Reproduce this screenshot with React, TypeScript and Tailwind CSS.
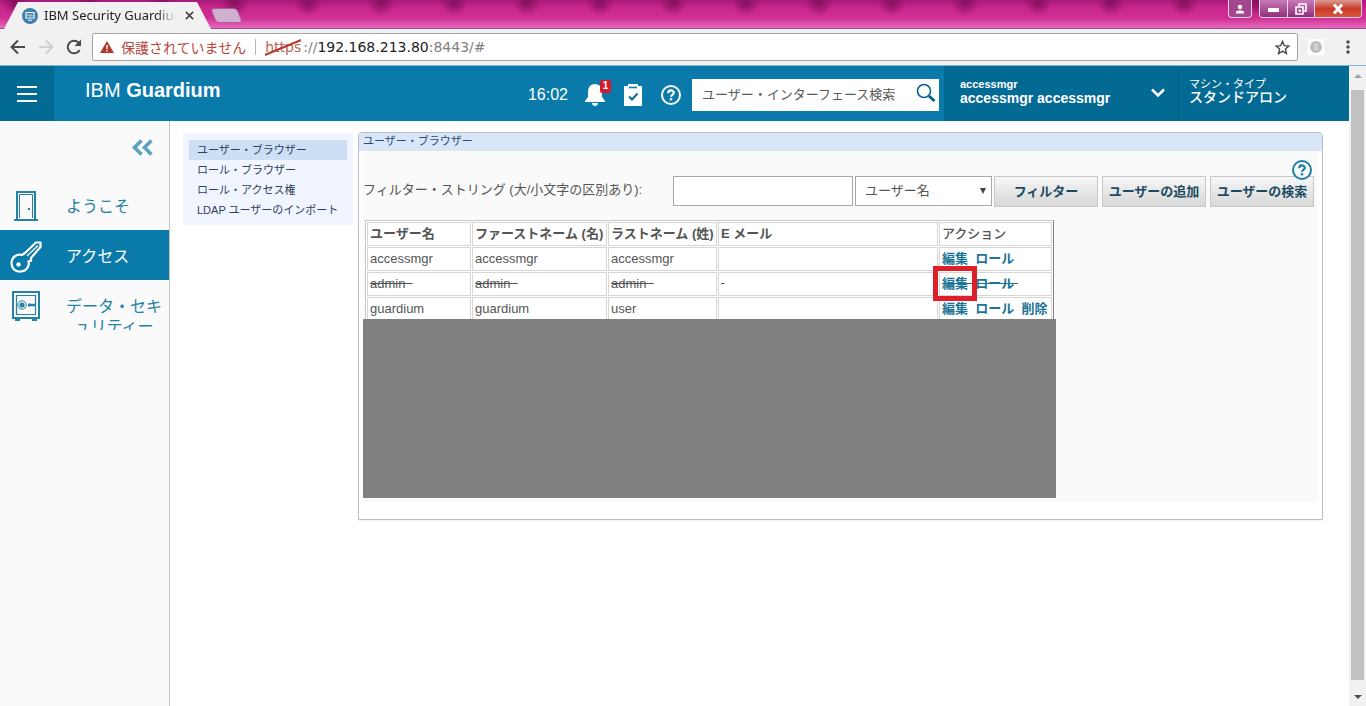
import type { ReactNode } from "react";

type User = {
  name: string;
  first: string;
  last: string;
  disabled?: boolean;
  removable?: boolean;
};

const users: User[] = [
  { name: "accessmgr", first: "accessmgr", last: "accessmgr" },
  { name: "admin", first: "admin", last: "admin", disabled: true },
  { name: "guardium", first: "guardium", last: "user", removable: true },
];

const menu = ["ユーザー・ブラウザー", "ロール・ブラウザー", "ロール・アクセス権", "LDAP ユーザーのインポート"];

const NBSP = "\u00a0";

function HelpIcon({ className }: { className?: string }) {
  return (
    <svg viewBox="0 0 20 20" className={className} fill="none" stroke="currentColor" strokeWidth="2">
      <circle cx="10" cy="10" r="9" />
      <path d="M7.2 8.2c0-3.6 5.6-3.6 5.6-.4 0 2-2.8 2-2.8 4" strokeWidth="2.2" />
      <path d="M10 13.2v2.2" strokeWidth="2.4" />
    </svg>
  );
}

function WindowButtons() {
  return (
    <div className="ml-auto flex h-[18px] gap-[7px] pr-1">
      <button aria-label="プロファイル" className="flex w-6 items-center justify-center rounded-b border border-t-0 border-pink-200 bg-[#a3468f]">
        <svg viewBox="0 0 10 10" className="size-[10px] fill-white">
          <circle cx="5" cy="3" r="2.2" />
          <path d="M1 9.5V8c0-2 8-2 8 0v1.5z" />
        </svg>
      </button>
      <div className="flex overflow-hidden rounded-b border border-t-0 border-pink-200">
        <button aria-label="最小化" className="flex w-7 items-end justify-center border-r border-pink-200 bg-linear-to-b from-[#c77ab8] to-[#8e2f7c] pb-[5px]">
          <span className="h-1 w-[11px] bg-white" />
        </button>
        <button aria-label="元に戻す" className="flex w-[27px] items-center justify-center border-r border-pink-200 bg-linear-to-b from-[#c77ab8] to-[#8e2f7c]">
          <svg viewBox="0 0 12 12" className="size-3" fill="none" stroke="white" strokeWidth="1.6">
            <path d="M4 3V1h7v7H9" />
            <path d="M1 4h7v7H1z" />
            <path d="M4 7h1.5v1.5H4z" strokeWidth="1" />
          </svg>
        </button>
        <button aria-label="閉じる" className="flex w-[46px] items-center justify-center bg-linear-to-b from-[#d99a90] via-[#c8382a] to-[#d8573a]">
          <svg viewBox="0 0 12 10" className="h-[10px] w-3" stroke="white" strokeWidth="3">
            <path d="M2 0.5l8 9M10 0.5l-8 9" />
          </svg>
        </button>
      </div>
    </div>
  );
}

function TabStrip() {
  return (
    <div className="flex h-[29px] border-b border-[#9d4a90] bg-[radial-gradient(ellipse_14px_14px_at_16px_2px,#84105f,transparent),linear-gradient(#a81a7c,#c9278a_30%,#cf2f94_65%,#e86bbd)] [background-size:73px_100%]">
      <div className="ml-1 flex h-[29px] w-[207px] items-center bg-[#f2f1f2] pl-[18px] pt-[2px] text-[13px] text-[#222] [clip-path:polygon(0_100%,14px_2px,193px_2px,100%_100%)] font-['Noto_Sans','Noto_Sans_CJK_JP',sans-serif]">
        <svg viewBox="0 0 16 16" className="size-4 shrink-0">
          <circle cx="8" cy="8" r="8" fill="#3f7fae" />
          <path d="M4 4.5h8v5.5H4zM6 12.3h4" fill="none" stroke="#fff" strokeWidth="1.1" />
          <path d="M5 8l1.5-1.5L8 8.5l1.2-2 1.6 1.7" fill="none" stroke="#fff" strokeWidth=".8" />
        </svg>
        <span className="ml-[6px] w-[132px] overflow-hidden whitespace-nowrap [mask-image:linear-gradient(to_right,black_85%,transparent)]">
          IBM Security Guardium
        </span>
        <button aria-label="タブを閉じる" className="ml-[9px]">
          <svg viewBox="0 0 10 10" className="size-[9px]" stroke="#444" strokeWidth="1.8">
            <path d="M1 1l8 8M9 1l-8 8" />
          </svg>
        </button>
      </div>
      <button aria-label="新しいタブ" className="mt-2 ml-[2px] h-[15px] w-[27px] skew-x-[22deg] rounded-sm border border-[#b0589c] bg-[#d0b0cf]" />
      <WindowButtons />
    </div>
  );
}

function AddressBar() {
  return (
    <div className="flex h-[37px] items-center border-b border-[#86b6d6] bg-[#f2f1f2] pl-[9px] text-[#4a4a4a]">
      <button aria-label="戻る">
        <svg viewBox="0 0 18 18" className="size-[18px]" fill="none" stroke="#4a4a4a" strokeWidth="2">
          <path d="M16 9H3M9 2.5L2.5 9 9 15.5" />
        </svg>
      </button>
      <button aria-label="進む" className="ml-[10px]">
        <svg viewBox="0 0 18 18" className="size-[18px]" fill="none" stroke="#d0d0d0" strokeWidth="2">
          <path d="M2 9h13M9 2.5L15.5 9 9 15.5" />
        </svg>
      </button>
      <button aria-label="再読み込み" className="ml-[10px]">
        <svg viewBox="0 0 18 18" className="size-[18px]" fill="none" stroke="#4a4a4a" strokeWidth="2">
          <path d="M14.6 12A6.3 6.3 0 1 1 13.5 4.6" />
          <path d="M16 1.5v6.5H9.5z" fill="#4a4a4a" stroke="none" />
        </svg>
      </button>
      <div className="ml-[9px] flex h-7 flex-1 items-center rounded-xs border border-[#a5a5a5] bg-white px-[7px] text-[14px] font-['DejaVu_Sans','Noto_Sans_CJK_JP',sans-serif]">
        <svg viewBox="0 0 14 12" className="h-3 w-[14px]">
          <path d="M7 0l7 12H0z" fill="#b23a2c" />
          <path d="M7 4v4M7 9v1.5" stroke="#fff" strokeWidth="1.4" />
        </svg>
        <span className="ml-[7px] text-[#b8483c] font-['Noto_Sans_CJK_JP',sans-serif]">保護されていません</span>
        <span className="mx-[9px] h-4 w-px bg-[#b5b5b5]" />
        <span className="relative mr-[2px] text-[#b8665c]">
          https
          <svg viewBox="0 0 36 14" className="absolute inset-0 size-full" preserveAspectRatio="none">
            <path d="M0 12L36 2" stroke="#b23a2c" strokeWidth="1.5" />
          </svg>
        </span>
        <span className="text-[#808080]">://</span>
        <span className="text-[#222]">192.168.213.80</span>
        <span className="text-[#808080]">:8443/#</span>
        <button aria-label="ブックマーク" className="ml-auto">
          <svg viewBox="0 0 16 16" className="size-[15px]" fill="none" stroke="#4a4a4a" strokeWidth="1.5">
            <path d="M8 1.5l1.9 4.5 4.9.4-3.7 3.2 1.1 4.8L8 11.8l-4.2 2.6 1.1-4.8L1.2 6.4l4.9-.4z" />
          </svg>
        </button>
      </div>
      <button aria-label="拡張機能" className="ml-[10px] flex size-4 items-center justify-center bg-white">
        <svg viewBox="0 0 12 12" className="size-3">
          <circle cx="6" cy="6" r="6" fill="#bdbdbd" />
          <path d="M8 4c-2-1.5-4 0-3 1.3s3 .7 2.8 2S5 8.8 4 7.8" fill="none" stroke="#e6e6e6" strokeWidth="1.2" />
        </svg>
      </button>
      <button aria-label="メニュー" className="mr-4 ml-[22px]">
        <svg viewBox="0 0 4 14" className="h-[14px] w-1 fill-[#4a4a4a]">
          <circle cx="2" cy="2" r="1.7" />
          <circle cx="2" cy="7" r="1.7" />
          <circle cx="2" cy="12" r="1.7" />
        </svg>
      </button>
    </div>
  );
}

function Header() {
  return (
    <header className="flex h-[55px] bg-[#0a7aaa] text-white">
      <button aria-label="ナビゲーション" className="flex w-[54px] flex-col items-center justify-center gap-[5px] bg-[#036a94]">
        <span className="h-[2px] w-5 bg-white" />
        <span className="h-[2px] w-5 bg-white" />
        <span className="h-[2px] w-5 bg-white" />
      </button>
      <h1 className="mt-[10px] ml-[31px] text-[20px] leading-7">
        IBM <b>Guardium</b>
      </h1>
      <div className="ml-auto flex items-center pt-[2px] pr-[5px]">
        <time className="text-[16px]">16:02</time>
        <button aria-label="通知" className="relative ml-4">
          <svg viewBox="0 0 22 24" className="h-6 w-[22px] fill-white">
            <path d="M11 1c5 0 7 4 7 8v5l3 4v1H1v-1l3-4V9c0-4 2-8 7-8zM8 20h6c0 4-6 4-6 0z" />
          </svg>
          <span className="absolute -top-[3px] -right-[5px] flex h-[13px] w-[11px] items-center justify-center rounded-xs bg-[#d9182d] text-[10px] font-bold leading-none">
            1
          </span>
        </button>
        <button aria-label="タスク" className="ml-[18px]">
          <svg viewBox="0 0 18 22" className="h-[22px] w-[18px]">
            <path d="M0 2h4V0h10v2h4v20H0z" fill="#fff" />
            <path d="M5 3.5h8" stroke="#0a7aaa" strokeWidth="1.6" />
            <path d="M5 12.5l3 3 5.5-6" fill="none" stroke="#0a6a94" strokeWidth="2" />
          </svg>
        </button>
        <button aria-label="ヘルプ" className="ml-[19px]">
          <HelpIcon className="size-5" />
        </button>
        <label className="ml-[11px] flex h-8 w-[247px] items-center bg-white pr-[3px] pl-[10px]">
          <input
            aria-label="ユーザー・インターフェース検索"
            placeholder="ユーザー・インターフェース検索"
            className="min-w-0 flex-1 text-[13px] text-[#444] outline-none placeholder:text-[#5a5a5a]"
          />
          <svg viewBox="0 0 20 20" className="mb-1 size-5" fill="none" stroke="#08648c">
            <circle cx="8" cy="8" r="6.5" strokeWidth="1.6" />
            <path d="M13 13l5.5 5" strokeWidth="3" />
          </svg>
        </label>
      </div>
      <button className="flex w-[234px] items-start justify-between bg-[#036a94] pt-[10px] pr-[13px] pl-4 text-left font-bold">
        <span>
          <span className="block text-[11px] leading-4">accessmgr</span>
          <span className="block text-[14px] leading-3">accessmgr accessmgr</span>
        </span>
        <svg viewBox="0 0 14 10" className="mt-3 h-[10px] w-[14px]" fill="none" stroke="white" strokeWidth="2.5">
          <path d="M1 1.5l6 6 6-6" />
        </svg>
      </button>
      <div className="w-[171px] border-l border-[#075a80] bg-[#036a94] pt-[12px] pl-[10px]">
        <div className="text-[11px] leading-3">マシン・タイプ</div>
        <div className="text-[14px] font-medium leading-[14px]">スタンドアロン</div>
      </div>
    </header>
  );
}

function DoorIcon() {
  return (
    <svg viewBox="0 0 24 30" className="h-[30px] w-6" fill="none" stroke="#2382a5">
      <path d="M3 28V1h18v27" strokeWidth="2" />
      <path d="M5.5 27V3.5h13V27" strokeWidth="1" />
      <path d="M0 29h24" strokeWidth="2" />
      <path d="M15 17v2" strokeWidth="2" />
    </svg>
  );
}

function KeyIcon() {
  return (
    <svg viewBox="0 0 32 32" className="size-8" fill="none" stroke="white" strokeWidth="2.2" strokeLinejoin="round">
      <path d="M15 12L26 1.5h4.500V6L21 17v3h-2.500c1 4-1 10-8 10.500C5 31 1.500 27 1.500 22.500 1.500 16 7 12.500 12 14z" />
      <path d="M17 15L28 4.500" strokeWidth="1.400" />
      <circle cx="8.500" cy="23.500" r="1.800" fill="white" strokeWidth="1" />
    </svg>
  );
}

function SafeIcon() {
  return (
    <svg viewBox="0 0 28 30" className="h-[30px] w-7" fill="none" stroke="#2382a5">
      <path d="M1 1h26v26H1z" strokeWidth="2" />
      <path d="M4.5 4.5h19v19h-19z" strokeWidth="1.2" />
      <path d="M3 29h5M20 29h5" strokeWidth="2" />
      <circle cx="10" cy="14" r="4.2" strokeWidth="1" />
      <circle cx="10" cy="14" r="2.6" fill="#2382a5" stroke="none" />
      <path d="M16 14h7M17.5 12.5v3" strokeWidth="2.4" />
    </svg>
  );
}

function NavItem({ icon, active, children }: { icon: ReactNode; active?: boolean; children: ReactNode }) {
  return (
    <a
      href="#"
      className={`flex h-[50px] overflow-hidden pt-[11px] text-center text-[16px] leading-5 ${active ? "bg-[#0a7aaa] text-white" : "text-[#2382a5]"}`}
    >
      <span className="flex w-[52px] shrink-0 justify-center">{icon}</span>
      <span className="ml-[14px] pt-[6px] whitespace-nowrap">{children}</span>
    </a>
  );
}

function Sidebar() {
  return (
    <nav className="w-[170px] shrink-0 border-r border-[#c4c4c4] bg-[#fafafa]">
      <div className="flex h-[59px] justify-end pt-[18px] pr-4">
        <button aria-label="折りたたむ" className="h-[17px]">
          <svg viewBox="0 0 21 17" className="h-[17px] w-[21px]" fill="none" stroke="#5aa3bd" strokeWidth="3.6">
            <path d="M9.5 1.5l-7 7 7 7M19.5 1.5l-7 7 7 7" />
          </svg>
        </button>
      </div>
      <NavItem icon={<DoorIcon />}>ようこそ</NavItem>
      <NavItem icon={<KeyIcon />} active>
        アクセス
      </NavItem>
      <NavItem icon={<SafeIcon />}>
        データ・セキ
        <br />
        ュリティー
      </NavItem>
    </nav>
  );
}

function FilterBar() {
  const button =
    "h-[31px] w-[104px] shrink-0 border border-[#c8c8c8] bg-linear-to-b from-[#f6f6f6] to-[#d8d8d8] font-bold text-[#1d4a63] whitespace-nowrap";
  return (
    <form className="relative flex pt-[25px] pr-1" onSubmit={(e) => e.preventDefault()}>
      <label htmlFor="filter" className="w-[310px] shrink-0 pt-1 leading-5">
        フィルター・ストリング (大/小文字の区別あり):
      </label>
      <input id="filter" className="h-[30px] min-w-0 flex-1 border border-[#a9a9a9] bg-white px-2" />
      <div className="relative ml-[2px] w-[137px] shrink-0">
        <select aria-label="フィルター項目" className="h-[30px] w-full appearance-none border border-[#a9a9a9] bg-white pl-[9px]">
          <option>ユーザー名</option>
        </select>
        <svg viewBox="0 0 6 6" className="pointer-events-none absolute top-3 right-[6px] size-[6px] fill-[#444]">
          <path d="M0 0h6L3 6z" />
        </svg>
      </div>
      <div className="ml-[2px] flex gap-1">
        <button className={button}>フィルター</button>
        <button className={button}>ユーザーの追加</button>
        <button className={button}>ユーザーの検索</button>
      </div>
      <button type="button" aria-label="ヘルプ" className="absolute top-[9px] right-[6px] rounded-full bg-[#fafafa] text-[#1b80a5]">
        <HelpIcon className="size-5" />
      </button>
    </form>
  );
}

function UserTable() {
  const cell = "h-6 border border-[#d6d6d6] px-[2px] py-0 leading-[18px]";
  const link = "font-bold text-[#1b7397]";
  return (
    <table className="mt-[13px] ml-[2px] w-[689px] table-fixed border-separate border-spacing-px border border-t-[#c9c9c9] border-r-[#808080] border-b-[#808080] border-l-[#c9c9c9] bg-white text-left">
      <colgroup>
        <col className="w-[104px]" />
        <col className="w-[135px]" />
        <col className="w-[109px]" />
        <col className="w-[220px]" />
        <col />
      </colgroup>
      <thead>
        <tr className="whitespace-nowrap">
          <th className={`${cell} font-bold`}>ユーザー名</th>
          <th className={`${cell} font-bold`}>ファーストネーム (名)</th>
          <th className={`${cell} font-bold`}>ラストネーム (姓)</th>
          <th className={`${cell} font-bold`}>E メール</th>
          <th className={`${cell} font-medium`}>アクション</th>
        </tr>
      </thead>
      <tbody>
        {users.map((u) => {
          const pad = u.disabled ? NBSP + NBSP : "";
          return (
            <tr key={u.name} className={u.disabled ? "[&>td]:line-through" : ""}>
              <td className={cell}>{u.name + pad}</td>
              <td className={cell}>{u.first + pad}</td>
              <td className={cell}>{u.last + pad}</td>
              <td className={cell}>{u.disabled ? NBSP : ""}</td>
              <td className={`${cell} whitespace-nowrap`}>
                <a href="#" className={`${link} relative`}>
                  編集
                  {u.disabled && <span className="absolute -inset-x-[9px] -inset-y-[10px] border-[5px] border-[#dc1f28]" />}
                </a>
                {NBSP + NBSP}
                <a href="#" className={link}>
                  ロール
                </a>
                {u.disabled && NBSP}
                {u.removable && (
                  <>
                    {NBSP + NBSP}
                    <a href="#" className={link}>
                      削除
                    </a>
                  </>
                )}
              </td>
            </tr>
          );
        })}
      </tbody>
    </table>
  );
}

function Scrollbar() {
  return (
    <div className="flex w-[17px] shrink-0 flex-col items-center bg-[#f1f1f1]">
      <div className="flex h-6 items-center pb-1">
        <svg viewBox="0 0 8 4" className="h-1 w-2 fill-[#a3a3a3]">
          <path d="M0 4l4-4 4 4z" />
        </svg>
      </div>
      <div className="w-[13px] flex-1 bg-[#c1c1c1]" />
      <div className="flex h-[26px] items-center pt-2">
        <svg viewBox="0 0 8 4" className="h-1 w-2 fill-[#505050]">
          <path d="M0 0l4 4 4-4z" />
        </svg>
      </div>
    </div>
  );
}

export default function App() {
  return (
    <div className="flex min-h-screen flex-col bg-white text-[13px] text-[#555] font-['Liberation_Sans','Noto_Sans_CJK_JP',sans-serif]">
      <TabStrip />
      <AddressBar />
      <div className="flex flex-1">
        <div className="flex min-w-0 flex-1 flex-col">
          <Header />
          <div className="flex flex-1">
            <Sidebar />
            <aside className="mt-3 ml-[13px] h-[92px] w-[170px] shrink-0 bg-[#f0f5ff] px-[6px] pt-[7px]">
              <ul className="text-[11px] leading-5 text-[#2f3f5c]">
                {menu.map((m, i) => (
                  <li key={m} className={`h-5 pl-2 whitespace-nowrap ${i === 0 ? "bg-[#cddff5]" : ""}`}>
                    <a href="#">{m}</a>
                  </li>
                ))}
              </ul>
            </aside>
            <main className="mt-[11px] mr-[26px] ml-[5px] min-w-0 flex-1 self-start rounded-t border border-[#b9bfca] bg-white pb-[17px] shadow-xs">
              <h2 className="h-[18px] rounded-t bg-[#d9e6f7] pl-1 text-[11px] leading-4 text-[#2f4a78]">ユーザー・ブラウザー</h2>
              <section className="mr-1 ml-1 bg-[#fafafa] pb-1">
                <FilterBar />
                <UserTable />
                <div className="relative -mt-1 h-[179px] w-[693px] bg-[#808080]" />
              </section>
            </main>
          </div>
        </div>
        <Scrollbar />
      </div>
    </div>
  );
}
